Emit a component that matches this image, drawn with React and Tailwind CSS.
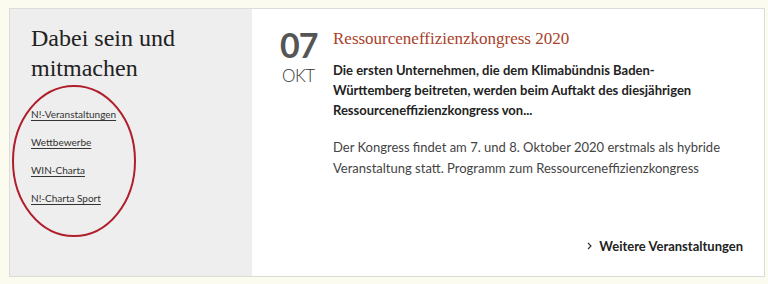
import React from 'react';

const links = ['N!-Veranstaltungen', 'Wettbewerbe', 'WIN-Charta', 'N!-Charta Sport'];

const serif = { fontFamily: '"Liberation Serif", "DejaVu Serif", serif' };

export default function App() {
  return (
    <div className="w-[768px] h-[284px] bg-[#fcfbef] pt-[8px] pl-[9px]" style={{ fontFamily: 'Lato, "Liberation Sans", sans-serif' }}>
      <div className="flex w-[756px] h-[269px] border border-[#dcdcd8] bg-white">
        <div className="relative w-[242px] shrink-0 bg-[#eeeeee] pl-[21px] pt-[14px]">
          <h2 className="text-[24px] leading-[30px] text-[#222]" style={serif}>
            Dabei sein und<br />mitmachen
          </h2>
          <ul className="mt-[24px] flex flex-col gap-[14px]">
            {links.map(l => (
              <li key={l} className="text-[10px] leading-[14px] text-[#333] underline underline-offset-2">{l}</li>
            ))}
          </ul>
          <svg className="absolute left-[1px] top-[75px]" width="126" height="154" viewBox="0 0 126 154">
            <ellipse cx="63" cy="77" rx="61" ry="75" fill="none" stroke="#b01e2c" strokeWidth="2" />
          </svg>
        </div>
        <div className="flex flex-1 flex-col pl-[28px] pr-[21px] pt-[18px] pb-[20px]">
          <div className="flex">
            <div className="w-[53px] shrink-0 flex flex-col items-start">
              <span className="text-[34px] leading-[36px] font-bold tracking-[-1px] text-[#555]">07</span>
              <span className="mt-[4px] ml-[2px] text-[17px] leading-[17px] font-light tracking-[-0.5px] text-[#333]">OKT</span>
            </div>
            <div className="flex-1">
              <h3 className="text-[17px] leading-[24px] text-[#a8412a]" style={serif}>Ressourceneffizienzkongress 2020</h3>
              <p className="mt-[9px] text-[13px] leading-[20px] font-bold text-[#222]">
                Die ersten Unternehmen, die dem Klimabündnis Baden-<br />Württemberg beitreten, werden beim Auftakt des diesjährigen Ressourceneffizienzkongress von...
              </p>
              <p className="mt-[17px] text-[13px] leading-[21px] text-[#444]">
                Der Kongress findet am 7. und 8. Oktober 2020 erstmals als hybride Veranstaltung statt. Programm zum Ressourceneffizienzkongress
              </p>
            </div>
          </div>
          <div className="mt-auto flex items-center justify-end gap-[7px] text-[13px] font-bold text-[#222]">
            <svg width="5" height="8" viewBox="0 0 5 8">
              <path d="M1 1 L4 4 L1 7" fill="none" stroke="#333" strokeWidth="1.2" />
            </svg>
            <span>Weitere Veranstaltungen</span>
          </div>
        </div>
      </div>
    </div>
  );
}
